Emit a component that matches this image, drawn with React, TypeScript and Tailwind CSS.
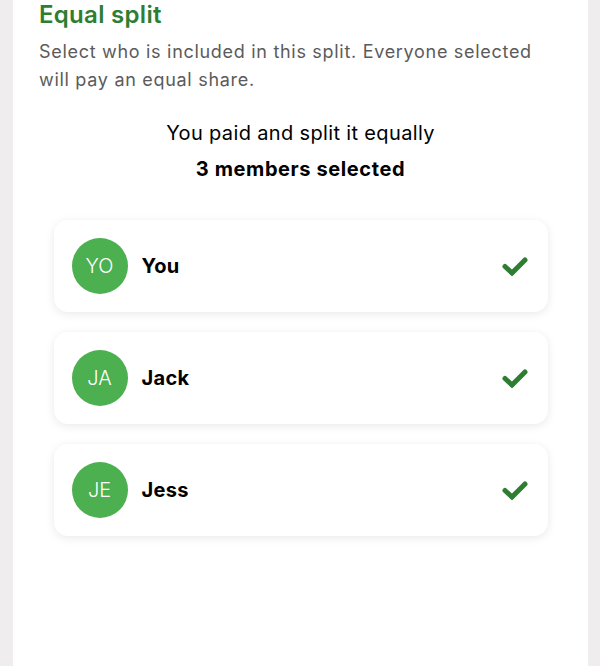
const members = [
    { initials: 'YO', name: 'You' },
    { initials: 'JA', name: 'Jack' },
    { initials: 'JE', name: 'Jess' },
]

const Check = () => (
    <svg width="26" height="20" viewBox="0 0 26 20" fill="none">
        <polyline
            points="3,10.5 10,17 23,4"
            stroke="#2e7d32"
            strokeWidth="5"
            strokeLinecap="round"
            strokeLinejoin="miter"
        />
    </svg>
)

const MemberCard = ({ initials, name }: { initials: string; name: string }) => (
    <div className="flex h-[92px] items-center rounded-[14px] bg-white pl-[18px] pr-[20px] shadow-[0_2px_10px_rgba(0,0,0,0.09)]">
        <div className="flex h-[56px] w-[56px] items-center justify-center rounded-full bg-[#4caf50] text-[20px] font-light text-white">
            {initials}
        </div>
        <span className="ml-[14px] flex-1 text-[20px] font-bold tracking-[0.3px] text-black">{name}</span>
        <Check />
    </div>
)

export default function App() {
    return (
        <div
            className="flex h-[666px] w-full justify-center overflow-hidden bg-[#efeded]"
            style={{ fontFamily: 'Inter, "Noto Sans", sans-serif' }}
        >
            <div className="ml-[1px] h-full w-[575px] bg-white px-[26px]">
                <h1 className="text-[24px] font-semibold leading-[30px] tracking-[0.3px] text-[#2e7d32]">
                    Equal split
                </h1>
                <p className="mt-[8px] text-[18px] leading-[28px] tracking-[0.7px] text-[#5b5b5b]">
                    Select who is included in this split. Everyone selected will pay an equal share.
                </p>
                <p className="mt-[25px] text-center text-[20px] leading-[28px] tracking-[0.35px] text-black">
                    You paid and split it equally
                </p>
                <p className="mt-[8px] text-center text-[20px] font-bold leading-[28px] tracking-[0.6px] text-black">
                    3 members selected
                </p>
                <div className="mx-auto mt-[37px] flex w-[494px] flex-col gap-[20px]">
                    {members.map((m) => (
                        <MemberCard key={m.initials} {...m} />
                    ))}
                </div>
            </div>
        </div>
    )
}
